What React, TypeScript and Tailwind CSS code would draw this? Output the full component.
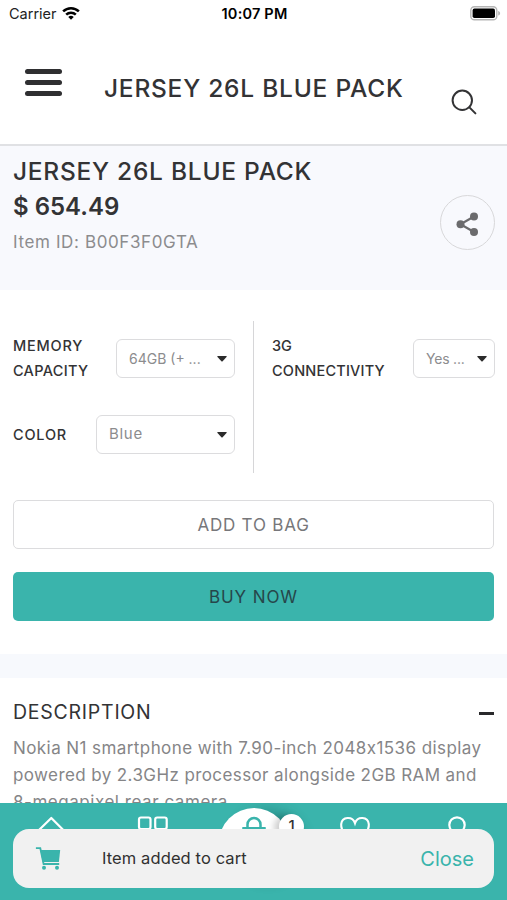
import { useState } from "react";
import clsx from "clsx";

interface SelectBoxProps {
  value: string;
  className?: string;
}

const DESCRIPTION_LINES = [
  { text: "Nokia N1 smartphone with 7.90-inch 2048x1536 display", className: "tracking-[0.42px]" },
  { text: "powered by 2.3GHz processor alongside 2GB RAM and", className: "tracking-[0.4px]" },
  { text: "8-megapixel rear camera.", className: "tracking-[0.54px]" },
];

function StatusBar() {
  return (
    <div className="grid h-7 grid-cols-3 items-center pl-[9px] pr-[6px] text-black">
      <div className="flex items-center gap-[6px]">
        <span className="text-[14.5px] leading-7 text-[#222]">Carrier</span>
        <svg className="-mt-[2px] -ml-px" width="18" height="15" viewBox="0 0 19 15" fill="none" stroke="currentColor" strokeWidth="2.7">
          <path d="M1.2 5.2a12 12 0 0 1 16.6 0" />
          <path d="M4.4 8.7a7.4 7.4 0 0 1 10.2 0" />
          <path d="M9.5 14.2 6.6 11.2a4.2 4.2 0 0 1 5.8 0z" fill="currentColor" stroke="none" />
        </svg>
      </div>
      <span className="-ml-px text-center text-[14.5px] leading-7 font-semibold tracking-[0.2px]">10:07 PM</span>
      <div className="-mt-[2px] flex justify-end">
        <svg width="31" height="15" viewBox="0 0 31 15">
          <rect x="0.8" y="0.8" width="26" height="13" rx="3.6" fill="#fff" stroke="#b5b5b5" strokeWidth="1.4" />
          <rect x="2.6" y="2.6" width="22.4" height="9.4" rx="1.8" fill="#000" />
          <path d="M28.2 5v4.6c1.2-.4 1.9-1.2 1.9-2.3s-.7-1.9-1.9-2.3z" fill="#b5b5b5" />
        </svg>
      </div>
    </div>
  );
}

function Header() {
  return (
    <header className="flex h-[118px] items-start border-b-2 border-[#e0e1e4] pl-[25px] pr-[30px]">
      <button aria-label="Menu" className="mt-[41px] flex w-[37px] flex-col gap-[6px]">
        <span className="h-[5px] rounded-full bg-[#2f2f31]" />
        <span className="h-[5px] rounded-full bg-[#2f2f31]" />
        <span className="h-[5px] rounded-full bg-[#2f2f31]" />
      </button>
      <h1 className="mt-[44px] ml-[42px] flex-1 text-[24.5px] leading-8 font-medium whitespace-nowrap tracking-[0.76px] text-[#333335]">
        JERSEY 26L BLUE PACK
      </h1>
      <button aria-label="Search" className="mt-[61px]">
        <svg width="26" height="26" viewBox="0 0 26 26" fill="none" stroke="#333335" strokeWidth="2" strokeLinecap="round">
          <circle cx="11.3" cy="11.3" r="9.7" />
          <path d="m18.4 18.4 6 6" />
        </svg>
      </button>
    </header>
  );
}

function SelectBox({ value, className }: SelectBoxProps) {
  return (
    <button
      className={clsx(
        "flex h-[39px] items-center justify-between rounded-[6px] border border-[#dcdcde] pl-[12px] pr-[7px] text-[#8c8c8e]",
        className
      )}
    >
      <span>{value}</span>
      <svg width="10" height="6" viewBox="0 0 10 6" fill="#2b2b2b">
        <path d="M.8 0h8.4q.9.1.3.9L5.6 5.3q-.6.6-1.2 0L.5.9Q-.1.1.8 0z" />
      </svg>
    </button>
  );
}

function BottomNav() {
  return (
    <nav className="absolute inset-x-0 bottom-0 flex h-[97px] overflow-hidden bg-[#3ab4ac] pl-[34px] text-white">
      <svg className="mt-[13px]" width="34" height="34" viewBox="0 0 34 34" fill="none" stroke="currentColor" strokeWidth="2.2">
        <path d="M4.5 14.5 17.3 2l12.5 12.5V32h-25z" strokeLinejoin="round" />
      </svg>
      <svg className="mt-[13px] ml-[69px]" width="32" height="32" viewBox="0 0 32 32" fill="none" stroke="currentColor" strokeWidth="2.2">
        <rect x="2" y="1.5" width="11.5" height="11.5" rx="2" />
        <rect x="18.2" y="1.5" width="11.5" height="11.5" rx="2" />
        <rect x="2" y="17.5" width="11.5" height="11.5" rx="2" />
        <rect x="18.2" y="17.5" width="11.5" height="11.5" rx="2" />
      </svg>
      <div className="relative mt-[5px] ml-[50px] flex size-[70px] justify-center rounded-full bg-white shadow-[14px_2px_14px_rgba(0,60,60,0.3)]">
        <svg className="mt-[8px]" width="28" height="28" viewBox="0 0 28 28" fill="none" stroke="#3ab4ac" strokeWidth="2.5">
          <path d="M7.5 12V8.5a6.5 6.5 0 0 1 13 0V12" />
          <path d="M2 28 3.5 12.2h21L26 28" />
        </svg>
        <span className="absolute top-[6px] left-[60px] flex size-[25px] items-center justify-center rounded-full bg-white text-[15px] font-medium text-[#333] shadow-[-5px_1px_7px_rgba(0,0,0,0.2)]">
          1
        </span>
      </div>
      <svg className="mt-[13px] ml-[50px]" width="32" height="30" viewBox="0 0 32 30" fill="none" stroke="currentColor" strokeWidth="2.1">
        <path d="M16 7.2C13.6 0 3 .2 2.2 8.2 1.5 16 10 22 16 27c6-5 14.5-11 13.8-18.8C29 .2 18.4 0 16 7.2z" />
      </svg>
      <svg className="mt-[13px] ml-[70px]" width="34" height="32" viewBox="0 0 34 32" fill="none" stroke="currentColor" strokeWidth="2.2">
        <circle cx="16" cy="9" r="7.7" />
        <path d="M3 31c0-16 26-16 26 0" />
      </svg>
    </nav>
  );
}

function Toast({ onClose }: { onClose: () => void }) {
  return (
    <div className="absolute inset-x-[13px] bottom-3 flex h-[59px] items-center rounded-[16px] bg-[#f1f1f1] pr-[20px] pl-[22px]">
      <svg width="27" height="25" viewBox="0 0 27 25" fill="#3ab4ac">
        <path d="M.9 2.2h4.4L8.6 18h15.6" fill="none" stroke="#3ab4ac" strokeWidth="1.8" />
        <path d="M5.2 4h20l-1.3 12H7.8z" />
        <circle cx="9" cy="21.8" r="2" />
        <circle cx="22" cy="21.8" r="2" />
      </svg>
      <span className="ml-[40px] flex-1 text-[16.5px] tracking-[0.1px] text-[#303030]">Item added to cart</span>
      <button onClick={onClose} className="text-xl text-[#3ab4ac]">
        Close
      </button>
    </div>
  );
}

export default function App() {
  const [open, setOpen] = useState(true);
  const [toast, setToast] = useState(true);

  return (
    <div className="relative h-[900px] w-full overflow-hidden bg-white font-['Inter',sans-serif] text-[#333335]">
      <StatusBar />
      <Header />

      <section className="flex h-36 items-start justify-between bg-[#f8f9fd] pr-3 pl-[13px]">
        <div className="whitespace-nowrap">
          <h2 className="mt-[7px] text-[24.5px] leading-9 font-medium tracking-[0.74px]">JERSEY 26L BLUE PACK</h2>
          <p className="text-2xl leading-[35px] font-semibold">$ 654.49</p>
          <p className="text-[17px] leading-9 tracking-[0.62px] text-[#8c8c8e]">Item ID: B00F3F0GTA</p>
        </div>
        <button aria-label="Share" className="mt-[49px] flex size-[55px] items-center justify-center rounded-full border border-[#d8d8da]">
          <svg className="mt-[2px] -ml-px" width="24" height="26" viewBox="0 0 24 26" fill="#6b6b6d">
            <path d="M19 5.5 5.5 13.2 19 21" fill="none" stroke="#6b6b6d" strokeWidth="2.2" />
            <circle cx="5.5" cy="13.2" r="4" />
            <circle cx="19" cy="5.5" r="4" />
            <circle cx="19" cy="21" r="4" />
          </svg>
        </button>
      </section>

      <section className="h-[364px] px-[13px] pt-[31px]">
        <div className="flex h-[152px] text-[14.5px] font-medium">
          <div className="w-[241px] border-r border-[#d6d6d8] pr-[18px]">
            <div className="flex items-start justify-between pt-[13px]">
              <div className="leading-[24.5px]">
                <p className="tracking-[0.8px]">MEMORY</p>
                <p className="tracking-[0.3px]">CAPACITY</p>
              </div>
              <SelectBox value="64GB (+ ..." className="mt-[5px] w-[119px] text-sm font-normal" />
            </div>
            <div className="mt-[32px] flex items-center justify-between">
              <span className="tracking-[0.8px]">COLOR</span>
              <SelectBox value="Blue" className="w-[139px] text-[15px] font-normal tracking-[0.7px]" />
            </div>
          </div>
          <div className="flex flex-1 items-start justify-between pt-[13px] pl-[18px]">
            <div className="leading-[24.5px]">
              <p>3G</p>
              <p className="tracking-[0.2px]">CONNECTIVITY</p>
            </div>
            <SelectBox value="Yes ..." className="mt-[5px] -mr-px w-[82px] text-sm font-normal tracking-[-0.2px]" />
          </div>
        </div>
        <button className="mt-[27px] h-[49px] w-full rounded-[5px] border border-[#dcdcde] pt-[2px] text-[17px] tracking-[0.8px] text-[#77777a]">
          ADD TO BAG
        </button>
        <button className="mt-[23px] h-[49px] w-full rounded-[5px] bg-[#3ab4ac] pt-[2px] text-[17px] tracking-[0.9px] text-[#26464a]">
          BUY NOW
        </button>
      </section>

      <section className="border-t-[24px] border-[#f7f9fd] px-[13px] pt-[18px]">
        <button onClick={() => setOpen(!open)} className="flex h-8 w-full items-center justify-between text-[19.5px] tracking-[0.75px]">
          <span className="mt-px">DESCRIPTION</span>
          <span className="mt-[3px] h-[3px] w-[15px] bg-[#29292b]" />
        </button>
        {open && (
          <div className="mt-[7px] text-[17px] leading-[27px] whitespace-nowrap text-[#858587]">
            {DESCRIPTION_LINES.map((line) => (
              <p key={line.text} className={line.className}>
                {line.text}
              </p>
            ))}
          </div>
        )}
      </section>

      <BottomNav />
      {toast && <Toast onClose={() => setToast(false)} />}
    </div>
  );
}
